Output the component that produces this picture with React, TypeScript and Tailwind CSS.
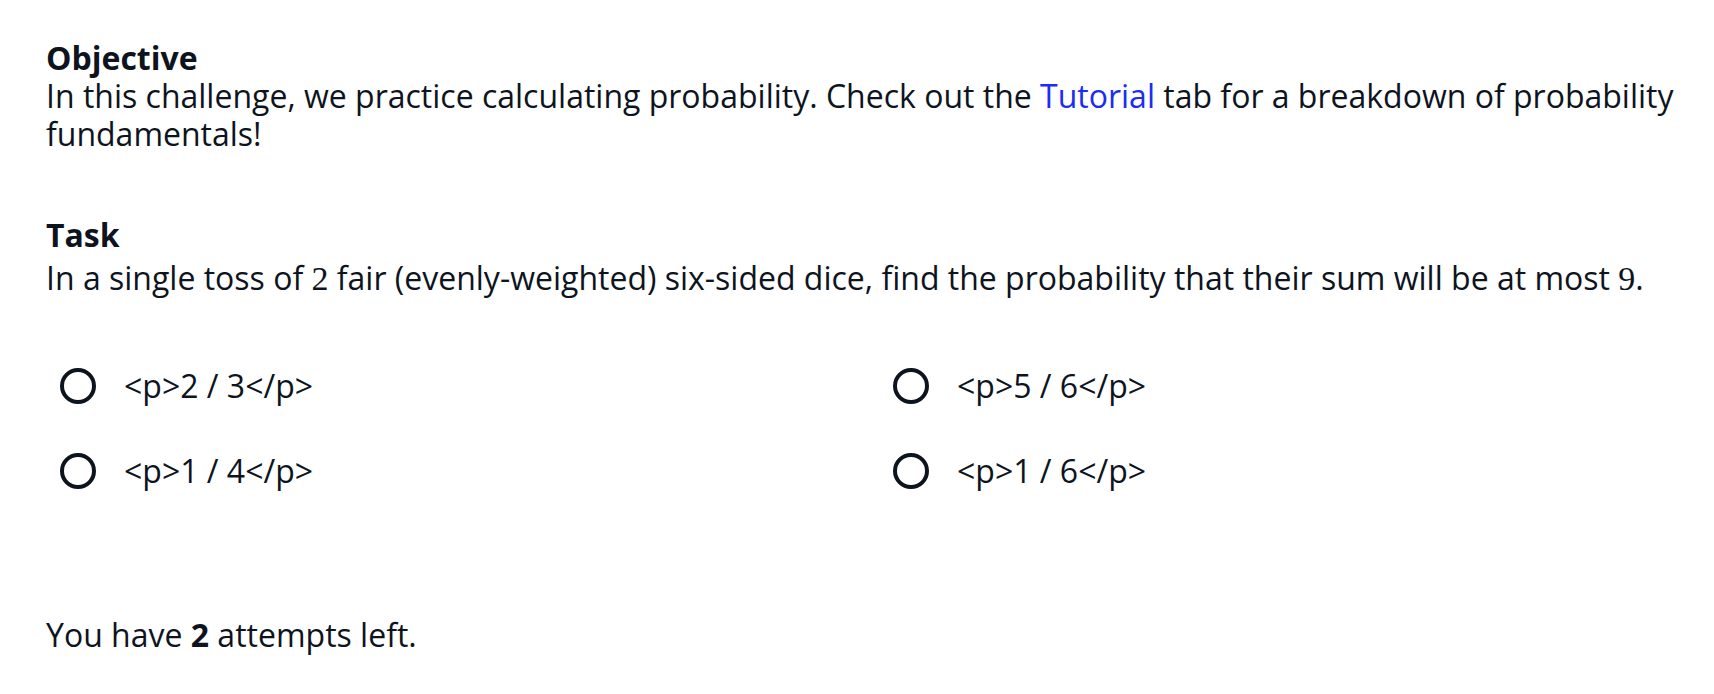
const options = ["<p>2 / 3</p>", "<p>5 / 6</p>", "<p>1 / 4</p>", "<p>1 / 6</p>"]

function Radio({ label }: { label: string }) {
  return (
    <label className="flex items-center gap-[28px] pl-[14px] cursor-pointer">
      <span className="w-[36px] h-[36px] rounded-full border-[4px] border-[#0e141e] shrink-0" />
      <span>{label}</span>
    </label>
  )
}

function TeX({ children }: { children: string }) {
  return <span className="font-['Liberation_Serif',serif] text-[34px]">{children}</span>
}

export default function App() {
  return (
    <div className="min-h-screen bg-white text-[#0e141e] font-['Open_Sans',sans-serif] text-[32px] leading-[38px] pl-[46px] pr-[20px] pt-[39px]">
      <section>
        <h3 className="font-bold">Objective</h3>
        <p>
          In this challenge, we practice calculating probability. Check out the{" "}
          <a href="#" className="text-[#1a2cf5]">Tutorial</a> tab for a breakdown of probability fundamentals!
        </p>
      </section>

      <section className="mt-[63px]">
        <h3 className="font-bold">Task</h3>
        <p className="mt-[5px]">
          In a single toss of <TeX>2</TeX> fair (evenly-weighted) six-sided dice, find the probability that their sum will be at most <TeX>9</TeX>.
        </p>
      </section>

      <div className="grid grid-cols-2 gap-x-[18px] gap-y-[47px] mt-[69px]">
        {options.map((o) => (
          <Radio key={o} label={o} />
        ))}
      </div>

      <p className="mt-[126px]">
        You have <b>2</b> attempts left.
      </p>
    </div>
  )
}
